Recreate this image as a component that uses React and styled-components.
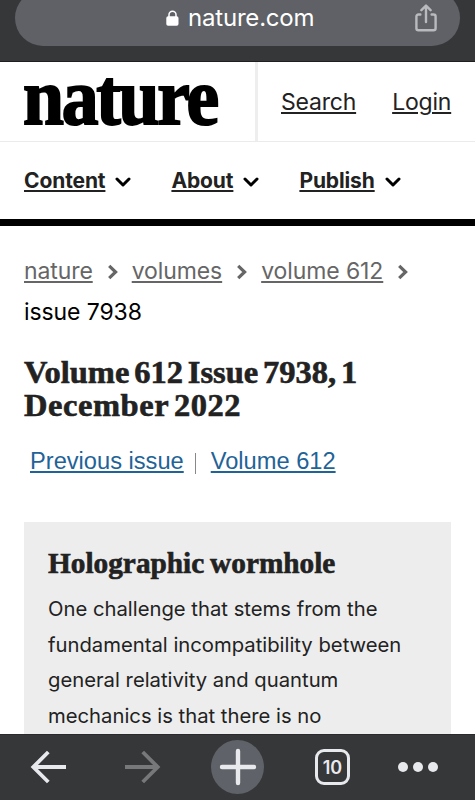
import React from 'react';
import styled, { createGlobalStyle } from 'styled-components';

const menus = [
  { id: 1, label: 'Content', gap: 40 },
  { id: 2, label: 'About', gap: 40 },
  { id: 3, label: 'Publish', gap: 0 },
];

const crumbs = ['nature', 'volumes', 'volume 612'];

const App = () => {
  return (
    <>
      <GlobalStyle />
      <Screen>
        <AddressBar />
        <Page>
          <SiteHeader />
          <Breadcrumbs />
          <IssueHeading />
          <Summary />
        </Page>
        <BottomBar />
      </Screen>
    </>
  );
};

const AddressBar = () => {
  return (
    <TopBar>
      <Pill>
        <LockIcon viewBox="0 0 13 16">
          <path
            d="M3 7V4.8a3.5 3.5 0 0 1 7 0V7"
            fill="none"
            stroke="#fff"
            strokeWidth="1.5"
          />
          <rect x="0.3" y="6.2" width="12.2" height="9.5" rx="1.8" fill="#fff" />
        </LockIcon>
        <Host>nature.com</Host>
        <ShareIcon viewBox="0 0 22 28">
          <path d="M5.4 10.5H3.4a2 2 0 0 0-2 2V24.2a2 2 0 0 0 2 2h15.2a2 2 0 0 0 2-2V12.5a2 2 0 0 0-2-2h-2" />
          <path d="M11 18V2.4M6.4 6.2 11 1.6l4.6 4.6" />
        </ShareIcon>
      </Pill>
    </TopBar>
  );
};

const SiteHeader = () => {
  return (
    <header>
      <LogoRow>
        <LogoCell>
          <Logo>nature</Logo>
        </LogoCell>
        <UserLinks>
          <UserLink>Search</UserLink>
          <UserLink>Login</UserLink>
        </UserLinks>
      </LogoRow>
      <Menu>
        {menus.map(({ id, label, gap }) => {
          return (
            <MenuItem key={id} $gap={gap}>
              <MenuLink>{label}</MenuLink>
              <Chevron viewBox="0 0 16 10">
                <path d="M2 2 8 8l6-6" />
              </Chevron>
            </MenuItem>
          );
        })}
      </Menu>
    </header>
  );
};

const Breadcrumbs = () => {
  return (
    <CrumbNav>
      {crumbs.map((crumb) => {
        return (
          <React.Fragment key={crumb}>
            <Crumb>{crumb}</Crumb>
            <CrumbArrow viewBox="0 0 10 16">
              <path d="M1.2 1.8 7.6 8l-6.4 6.2" />
            </CrumbArrow>
          </React.Fragment>
        );
      })}
      <CurrentCrumb>issue 7938</CurrentCrumb>
    </CrumbNav>
  );
};

const IssueHeading = () => {
  return (
    <>
      <Title>
        <TitleLine>Volume 612 Issue 7938, 1</TitleLine>
        <TitleLine $tracking="0.55px">December 2022</TitleLine>
      </Title>
      <IssueLinks>
        <IssueLink>Previous issue</IssueLink>
        <Divider />
        <IssueLink>Volume 612</IssueLink>
      </IssueLinks>
    </>
  );
};

const Summary = () => {
  return (
    <Card>
      <CardTitle>Holographic wormhole</CardTitle>
      <CardText>
        One challenge that stems from the fundamental incompatibility between
        general relativity and quantum mechanics is that there is no
      </CardText>
    </Card>
  );
};

const BottomBar = () => {
  return (
    <Toolbar>
      <ToolIcon viewBox="0 0 40 40">
        <path d="M38 20H5M20.3 5 5.3 20l15 15" />
      </ToolIcon>
      <ToolIcon viewBox="0 0 40 40" $dim>
        <path d="M2 20h33M19.7 5l15 15-15 15" />
      </ToolIcon>
      <NewTab>
        <ToolIcon viewBox="0 0 40 40" $round>
          <path d="M20 4v32M4 20h32" />
        </ToolIcon>
      </NewTab>
      <TabCount>10</TabCount>
      <Dots>
        <Dot />
        <Dot />
        <Dot />
      </Dots>
    </Toolbar>
  );
};

const GlobalStyle = createGlobalStyle`
  * {
    box-sizing: border-box;
  }
  body {
    margin: 0;
    background: #fff;
    color: #222;
    font-family: Inter, 'Liberation Sans', sans-serif;
  }
`;

const Screen = styled.div`
  display: flex;
  flex-direction: column;
  width: 475px;
  height: 800px;
  overflow: hidden;
`;

const TopBar = styled.div`
  flex: none;
  height: 62px;
  padding: 0 15px;
  background: #363739;
  border-bottom: 1px solid #1f1d1e;
  overflow: hidden;
`;

const Pill = styled.div`
  display: grid;
  grid-template-columns: 150px 22px 1fr 22px;
  align-items: center;
  height: 56px;
  margin-top: -10px;
  padding: 0 23px 0 0;
  border-radius: 28px;
  background: #5f6166;
`;

const LockIcon = styled.svg`
  justify-self: end;
  width: 13px;
  height: 16px;
  margin-right: -14px;
`;

const Host = styled.span`
  grid-column: 3;
  padding-left: 1px;
  color: #fff;
  font-size: 24px;
  line-height: 30px;
  letter-spacing: -0.2px;
`;

const ShareIcon = styled.svg`
  width: 22px;
  height: 28px;
  fill: none;
  stroke: #b9babe;
  stroke-width: 2.4;
  stroke-linecap: round;
  stroke-linejoin: round;
`;

/* the article runs on underneath the toolbar */
const Page = styled.main`
  flex: 1;
  min-height: 0;
`;

const LogoRow = styled.div`
  display: flex;
  height: 80px;
  border-bottom: 1px solid #ebebeb;
`;

const LogoCell = styled.div`
  width: 258px;
  padding-left: 23px;
  border-right: 3px solid #eee;
`;

const Logo = styled.div`
  width: 220px;
  color: #000;
  font-family: 'Liberation Serif', serif;
  font-size: 80px;
  font-weight: 700;
  line-height: 71px;
  letter-spacing: -2.4px;
  -webkit-text-stroke: 2px #000;
  transform: scaleX(0.92);
  transform-origin: left;
`;

const UserLinks = styled.div`
  display: flex;
  gap: 36px;
  padding: 26px 0 0 23px;
`;

const UserLink = styled.a`
  font-size: 23px;
  line-height: 28px;
  letter-spacing: -0.2px;
  text-decoration: underline;
  text-decoration-thickness: 1.5px;
  text-underline-offset: 2px;
`;

const Menu = styled.nav`
  display: flex;
  align-items: center;
  height: 83.5px;
  padding: 2px 24px 0;
  border-bottom: 7px solid #000;
`;

const MenuItem = styled.div`
  display: flex;
  align-items: center;
  margin-right: ${(props) => props.$gap}px;
`;

const MenuLink = styled.a`
  font-size: 21px;
  font-weight: 700;
  line-height: 28px;
  letter-spacing: -0.12px;
  text-decoration: underline;
  text-decoration-thickness: 1.5px;
  text-underline-offset: 2px;
`;

const Chevron = styled.svg`
  width: 16px;
  height: 10px;
  margin: 1px 0 0 10px;
  fill: none;
  stroke: #000;
  stroke-width: 3;
  stroke-linecap: round;
  stroke-linejoin: round;
`;

const CrumbNav = styled.nav`
  display: flex;
  flex-wrap: wrap;
  align-items: center;
  margin: 25.5px 24px 0;
  font-size: 23px;
  line-height: 41px;
  letter-spacing: -0.1px;
`;

const Crumb = styled.a`
  color: #666;
  text-decoration: underline;
  text-decoration-thickness: 1.5px;
  text-underline-offset: 2px;
`;

const CrumbArrow = styled.svg`
  width: 10px;
  height: 16px;
  margin: 1px 14px 0 15px;
  fill: none;
  stroke: #666;
  stroke-width: 3.2;
`;

const CurrentCrumb = styled.span`
  flex-basis: 100%;
  color: #000;
`;

const Title = styled.h1`
  margin: 23px 24px 0;
  font-family: 'Liberation Serif', serif;
  font-size: 32.5px;
  font-weight: 700;
  line-height: 32.5px;
  word-spacing: -3.3px;
  -webkit-text-stroke: 0.6px #222;
`;

const TitleLine = styled.span`
  display: block;
  letter-spacing: ${(props) => props.$tracking || '0'};
`;

const IssueLinks = styled.div`
  display: flex;
  align-items: center;
  margin: 25px 30px 0;
  font-family: 'Liberation Sans', Arial, sans-serif;
  font-size: 23.65px;
  line-height: 30px;
`;

const IssueLink = styled.a`
  color: #1f6397;
  text-decoration: underline;
  text-decoration-thickness: 1.5px;
  text-underline-offset: 2px;
`;

const Divider = styled.span`
  width: 1px;
  height: 21px;
  margin: 5px 15px 0 11px;
  background: #888;
`;

const Card = styled.section`
  height: 300px;
  margin: 46px 24px 0;
  padding: 24px;
  background: #ededed;
`;

const CardTitle = styled.h2`
  margin: 0;
  font-family: 'Liberation Serif', serif;
  font-size: 29.3px;
  font-weight: 700;
  line-height: 34px;
  word-spacing: -1.5px;
  -webkit-text-stroke: 0.6px #222;
`;

const CardText = styled.p`
  margin: 11px 0 0;
  font-size: 20.25px;
  line-height: 35.7px;
`;

const Toolbar = styled.div`
  flex: none;
  display: grid;
  grid-template-columns: repeat(5, 95px);
  place-items: center;
  height: 66px;
  padding-bottom: 1px;
  background: #363739;
  border-top: 1px solid #2a2a2c;
`;

const ToolIcon = styled.svg`
  width: 40px;
  height: 40px;
  fill: none;
  stroke: ${(props) => (props.$dim ? '#77787a' : '#e8e9ed')};
  stroke-width: ${(props) => (props.$round ? 4.4 : 3.8)};
  stroke-linecap: ${(props) => (props.$round ? 'round' : 'butt')};
`;

const NewTab = styled.div`
  display: grid;
  place-items: center;
  width: 53px;
  height: 54px;
  border-radius: 50%;
  background: #5f6268;
`;

const TabCount = styled.div`
  display: grid;
  place-items: center;
  width: 35px;
  height: 36px;
  border: 3px solid #e8e9ed;
  border-radius: 9px;
  color: #e8e9ed;
  font-size: 18px;
  font-weight: 600;
`;

const Dots = styled.div`
  display: flex;
  gap: 5px;
  margin-right: 20px;
`;

const Dot = styled.span`
  width: 10px;
  height: 10px;
  border-radius: 50%;
  background: #e8e9ed;
`;

export default App;
